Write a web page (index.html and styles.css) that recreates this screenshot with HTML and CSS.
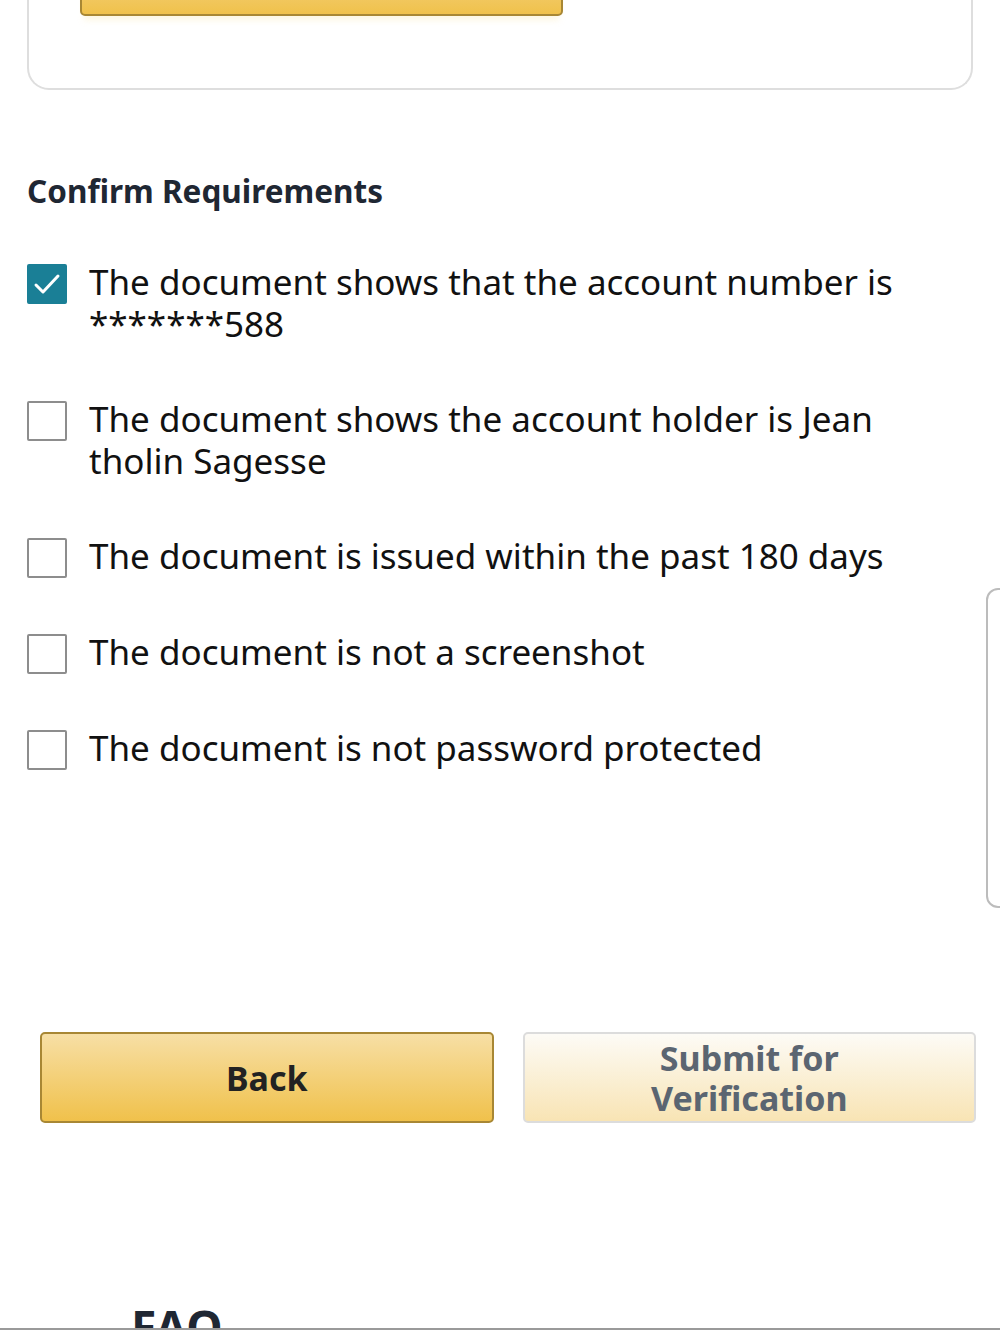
FILE: index.html
```html
<!DOCTYPE html>
<html lang="en">
<head>
    <meta charset="UTF-8">
    <meta name="viewport" content="width=device-width, initial-scale=1.0">
    <title>Confirm Requirements</title>
    <link rel="stylesheet" href="styles.css">
</head>
<body>
<div class="page">
    <div class="upload-card">
        <button class="yellow-button upload-button"></button>
    </div>

    <h2 class="section-title">Confirm Requirements</h2>

    <ul class="req-list">
        <li class="req-item">
            <span class="check-box checked">
                <svg viewBox="0 0 40 40" width="40" height="40"><path d="M9 21 L16 28 L31 12" fill="none" stroke="#fff" stroke-width="3" stroke-linecap="round" stroke-linejoin="round"/></svg>
            </span>
            <span class="req-text">The document shows that the account number is *******588</span>
        </li>
        <li class="req-item">
            <span class="check-box"></span>
            <span class="req-text">The document shows the account holder is Jean tholin Sagesse</span>
        </li>
        <li class="req-item">
            <span class="check-box"></span>
            <span class="req-text">The document is issued within the past 180 days</span>
        </li>
        <li class="req-item">
            <span class="check-box"></span>
            <span class="req-text">The document is not a screenshot</span>
        </li>
        <li class="req-item">
            <span class="check-box"></span>
            <span class="req-text">The document is not password protected</span>
        </li>
    </ul>

    <div class="action-row">
        <button class="yellow-button action-button">Back</button>
        <button class="yellow-button action-button disabled">Submit for Verification</button>
    </div>

    <h3 class="faq-title">FAQ</h3>
</div>

<div class="side-tab"></div>
<div class="bottom-bar"></div>
</body>
</html>
```

FILE: styles.css
```css
html, body { margin: 0; padding: 0; height: 1330px; overflow: hidden; background: #fff; }
body { font-family: "Noto Sans", "Open Sans", Arial, sans-serif; color: #111; }
.page { padding: 0 24px 0 27px; }

.upload-card {
    height: 190px; margin-top: -100px; margin-right: 3px;
    border: 2px solid #dedede; border-top: none; border-radius: 0 0 22px 22px;
    box-sizing: border-box; padding: 40px 0 0 51px;
}
.yellow-button {
    font-family: inherit; font-weight: bold; color: #222;
    background: linear-gradient(to bottom, #f7dfa5, #f0c14b);
    border: 2px solid #a88734; border-radius: 5px; cursor: pointer;
}
.upload-button { width: 483px; height: 76px; display: block; box-shadow: 0 8px 6px -4px rgba(250, 230, 170, 0.35); }

.section-title { margin: 81px 0 0; font-size: 31.5px; font-weight: bold; color: #1f2733; line-height: 40px; }

.req-list { list-style: none; margin: 52px 0 0; padding: 0; }
.req-item { display: flex; align-items: flex-start; gap: 22px; margin-bottom: 55px; }
.check-box {
    flex: none; width: 40px; height: 40px; box-sizing: border-box;
    border: 2px solid #8d8d8d; border-radius: 2px; background: #fff; margin-top: 1px;
}
.check-box.checked { background: #1a7f96; border-color: #1a7f96; }
.check-box svg { display: block; margin: -2px; }
.req-text { font-size: 35px; line-height: 42px; margin-top: -2px; padding-right: 60px; }

.action-row { display: flex; gap: 29px; margin: 262px 0 0 13px; }
.action-button { flex: 1; height: 91px; font-size: 34px; line-height: 40px; padding: 0 40px; }
.action-button.disabled {
    color: #5b6571; border-color: #dcdcdc; cursor: default;
    background: linear-gradient(to bottom, #fdfbf6, #f8e4b4);
}

.faq-title { margin: 172px 0 0 104px; font-size: 46px; font-weight: bold; color: #1f2733; }

.side-tab {
    position: fixed; right: -20px; top: 588px; width: 30px; height: 316px;
    border: 2px solid #bcbcbc; border-radius: 12px; background: #fff;
}
.bottom-bar { position: fixed; left: 0; right: 0; bottom: 0; height: 2px; background: #9a9a9a; }
```
